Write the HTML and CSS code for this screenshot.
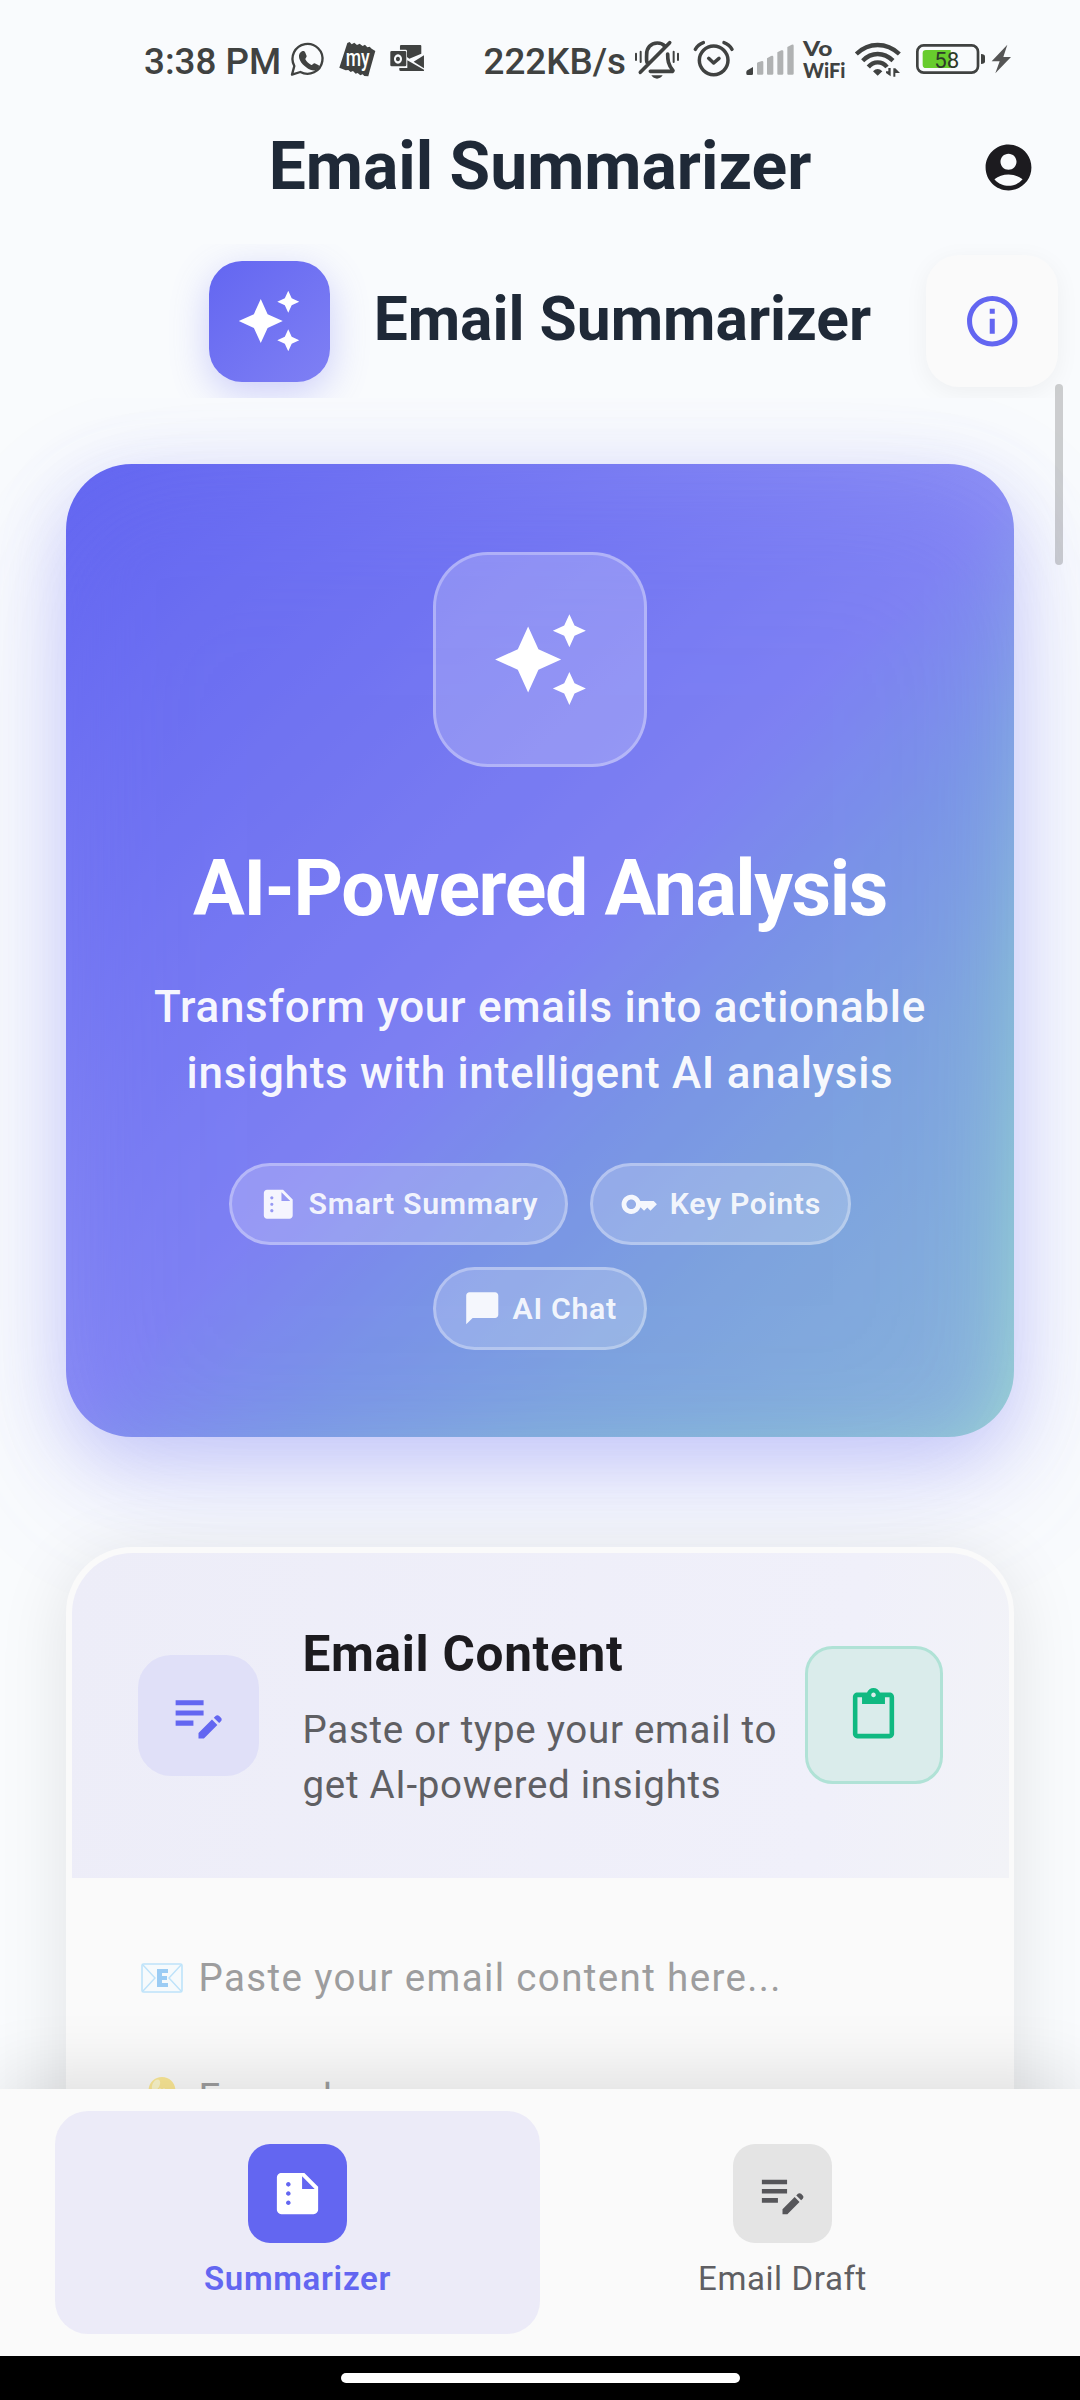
FILE: index.html
```html
<!DOCTYPE html>
<html lang="en">
<head>
<meta charset="utf-8">
<title>Email Summarizer</title>
<link rel="stylesheet" href="styles.css">
</head>
<body>
<svg class="defs" aria-hidden="true">
  <symbol id="sparkle" viewBox="0 0 24 24"><path d="M19 9l1.25-2.75L23 5l-2.75-1.25L19 1l-1.25 2.75L15 5l2.75 1.25L19 9zm-7.5.5L9 4 6.5 9.5 1 12l5.5 2.5L9 20l2.5-5.5L17 12l-5.5-2.5zM19 15l-1.25 2.75L15 19l2.75 1.25L19 23l1.25-2.75L23 19l-2.75-1.25L19 15z"/></symbol>
  <symbol id="summarize" viewBox="0 0 24 24"><path fill-rule="evenodd" d="M15 3H5c-1.1 0-1.99.9-1.99 2L3 19c0 1.1.89 2 1.99 2H19c1.1 0 2-.9 2-2V9l-6-6zM8 17c-.55 0-1-.45-1-1s.45-1 1-1 1 .45 1 1-.45 1-1 1zm0-4c-.55 0-1-.45-1-1s.45-1 1-1 1 .45 1 1-.45 1-1 1zm0-4c-.55 0-1-.45-1-1s.45-1 1-1 1 .45 1 1-.45 1-1 1zm6 1V4.500l5.500 5.500H14z"/></symbol>
  <symbol id="edit-note" viewBox="0 0 24 24"><path d="M3 10h11v2H3v-2zm0-2h11V6H3v2zm0 8h7v-2H3v2zm15.010-3.130.710-.710c.390-.390 1.020-.390 1.410 0l.710.710c.390.390.390 1.020 0 1.410l-.710.710-2.120-2.120zm-.710.710-5.300 5.300V21h2.120l5.300-5.300-2.120-2.120z"/></symbol>
</svg>
<div class="screen">
  <header class="status">
    <span class="status-time">3:38 PM</span>
    <svg class="notif" viewBox="500 60 430 120" width="143.300" height="40">
      <path class="line" d="M515 167l7-26a45 45 0 1 1 18 18z" stroke-width="7"/>
      <path class="ink" d="M545 97c5-2 8-1 10 4l4 10c1 3-5 8-4 10 4 8 10 13 18 17 3 1 7-6 10-5l12 6c2 1 1 6-1 9-5 7-14 8-24 4-17-7-33-24-34-38-1-7 3-14 9-17z"/>
      <path class="ink" d="M681 72l7-3 6 7 8-5 8 7 8-4 9 7 7-4 7 8 7-2 6 6 11 7-17 60-4 16-12-1-5-5-7 3-8-7-6 2-8-8-7 3-7-6-8 1-19-8z"/>
      <text class="my" x="676" y="141" textLength="72" lengthAdjust="spacingAndGlyphs">my</text>
      <path class="ink" d="M842 78h58q3 0 3 3v23l-36 15-7-5V96q0-4-4-4h-17v-10q0-4 3-4z"/>
      <path class="ink" fill-rule="evenodd" d="M814 96h40q4 0 4 4v38q0 4-4 4h-40q-4 0-4-4v-38q0-4 4-4zM833 106a12 14 0 1 0 .1 0zM833 113a6 7 0 1 1-.1 0z"/>
      <path class="ink" d="M911 109v39l-31-20zM861 124l50 28v4h-70q-4 0-4-4v-5h24z"/>
    </svg>
    <span class="status-net">222KB/s</span>
    <svg class="sys" viewBox="96 60 1149 120" width="383" height="40">
      <path class="line" d="M141 130q-2-5-1-24c0-19 12-34 32-34 9 0 17 3 22 9M203 105c0 18 1 31 16 50l-2 2h-66M209 71l-88 89" stroke-width="11"/>
      <path class="line" d="M108 104v19M122 98v31M221 98v31M234 104v19" stroke-width="6"/>
      <path class="ink" d="M154 169h34q-7 10-17 10t-17-10z"/>
      <circle class="line" cx="341" cy="124" r="43" stroke-width="10.500"/>
      <path class="line" d="M286 91q9-15 24-20M396 91q-9-15-24-20M326 118l15 14 16-14" stroke-width="10.500"/>
      <path class="ink" d="M459 144v20q0 4-4 4h-12q-4 0-4-4v-4q0-4 3-6z"/>
      <path class="faint" d="M471 133q0-2 3-3l12-4q4 0 4 3v35q0 3-4 3h-12q-3 0-3-3zM501 118l12-7q7-2 7 3v50q0 3-4 3h-12q-3 0-3-3zM532 100l12-6q6-2 6 3v67q0 3-4 3h-11q-3 0-3-3zM562 84l13-7q6-2 6 3v84q0 3-4 3h-12q-3 0-3-3z"/>
      <text class="vo" x="609" y="111" textLength="88" lengthAdjust="spacingAndGlyphs">Vo</text>
      <text class="vo" x="609" y="177" textLength="127" lengthAdjust="spacingAndGlyphs">WiFi</text>
      <g class="line arcs" stroke-width="13">
        <path d="M769 105q28-27 64-27t65 27"/>
        <path d="M788 125q20-20 45-20t46 20"/>
        <path d="M805 144q12-14 28-14 17 0 28 14"/>
      </g>
      <path class="ink" d="M819 157q14-14 28 0l-14 13zM858 157h7v-10h7v25l-14-10zM880 148v25h6v-11h14l-14-14z"/>
      <rect class="line" x="952" y="79" width="182" height="82" rx="19" stroke-width="8"/>
      <path class="ink" d="M1143 105q12 0 12 8v14q0 8-12 8z"/>
      <path class="charge" d="M978 93h74v54h-74q-10 0-10-10v-34q0-10 10-10z"/>
      <text class="pct" x="1003" y="146" textLength="75" lengthAdjust="spacingAndGlyphs">58</text>
      <path class="bolt" d="M1222 77l-47 50h24l-13 36 47-49h-23z"/>
    </svg>
  </header>

  <div class="appbar">
    <h1 class="appbar-title">Email Summarizer</h1>
    <svg class="account" viewBox="0 0 24 24"><path d="M12 2C6.480 2 2 6.480 2 12s4.480 10 10 10 10-4.480 10-10S17.520 2 12 2zm0 4c1.930 0 3.500 1.570 3.500 3.500S13.930 13 12 13s-3.500-1.570-3.500-3.500S10.070 6 12 6zm0 14c-2.030 0-4.430-.820-6.140-2.880C7.550 15.800 9.680 15 12 15s4.450.8 6.140 2.120C16.430 19.180 14.030 20 12 20z"/></svg>
  </div>

  <div class="toolbar">
    <div class="logo"><svg><use href="#sparkle"/></svg></div>
    <h2 class="toolbar-title">Email Summarizer</h2>
    <div class="info"><svg viewBox="0 0 24 24"><path d="M11 7h2v2h-2zm0 4h2v6h-2zm1-9C6.480 2 2 6.480 2 12s4.480 10 10 10 10-4.480 10-10S17.520 2 12 2zm0 18c-4.410 0-8-3.590-8-8s3.590-8 8-8 8 3.590 8 8-3.590 8-8 8z"/></svg></div>
  </div>

  <main class="scroll">
    <section class="hero">
      <div class="hero-icon"><svg><use href="#sparkle"/></svg></div>
      <h2 class="hero-title">AI-Powered Analysis</h2>
      <p class="hero-text">Transform your emails into actionable<br>insights with intelligent AI analysis</p>
      <div class="chips">
        <div class="chip"><svg><use href="#summarize"/></svg><span>Smart Summary</span></div>
        <div class="chip"><svg viewBox="0 0 24 24"><path d="M21 10h-8.350C11.830 7.670 9.610 6 7 6c-3.310 0-6 2.690-6 6s2.690 6 6 6c2.610 0 4.830-1.670 5.650-4H13l2 2 2-2 2 2 4-4.040L21 10zM7 15c-1.650 0-3-1.350-3-3s1.350-3 3-3 3 1.350 3 3-1.350 3-3 3z"/></svg><span>Key Points</span></div>
        <div class="chip"><svg viewBox="0 0 24 24"><path d="M20 2H4c-1.100 0-2 .9-2 2v18l4-4h14c1.100 0 2-.9 2-2V4c0-1.100-.9-2-2-2z"/></svg><span>AI Chat</span></div>
      </div>
    </section>

    <section class="card">
      <div class="card-head">
        <div class="card-icon"><svg><use href="#edit-note"/></svg></div>
        <div class="card-copy">
          <h3 class="card-title">Email Content</h3>
          <p class="card-text">Paste or type your email to<br>get AI-powered insights</p>
        </div>
        <div class="paste"><svg viewBox="0 0 24 24"><path d="M19 2h-4.180C14.400.84 13.300 0 12 0c-1.300 0-2.400.84-2.820 2H5c-1.100 0-2 .9-2 2v16c0 1.100.9 2 2 2h14c1.100 0 2-.9 2-2V4c0-1.100-.9-2-2-2zm-7 0c.55 0 1 .45 1 1s-.45 1-1 1-1-.45-1-1 .45-1 1-1zm7 18H5V4h2v3h10V4h2v16z"/></svg></div>
      </div>
      <div class="card-body">
        <div class="line-row">
          <svg class="emoji" viewBox="0 0 42 30"><rect x="1" y="1" width="40" height="28" rx="1.500" fill="#f4fbff" stroke="#82cdfa" stroke-width="1.600"/><path d="M2 2l12 13L2 28M40 2L28 15l12 13" fill="none" stroke="#82cdfa" stroke-width="1.400"/><path d="M16 6h11v4h-6v3h5v4h-5v3h6v4H16z" fill="#3ea0f0"/></svg>
          <span>Paste your email content here...</span>
        </div>
        <div class="line-row"></div>
        <div class="line-row">
          <svg class="emoji" viewBox="0 0 42 42"><path d="M21 0c-8 0-13.500 6-13.500 14 0 7 7 11 7 18h13c0-7 7-11 7-18C34.500 6 29 0 21 0z" fill="#fdd835"/><ellipse cx="15" cy="8" rx="3.500" ry="6" transform="rotate(28 15 8)" fill="#fff59d"/><path d="M17 14l2-2 2 2 2-2 2 2" fill="none" stroke="#fff" stroke-width="1.200"/></svg>
          <span>Example:</span>
        </div>
      </div>
    </section>
  </main>
  <div class="thumb"></div>

  <nav class="tabs">
    <div class="tab tab-on"><div class="tab-icon"><svg><use href="#summarize"/></svg></div><span>Summarizer</span></div>
    <div class="tab"><div class="tab-icon"><svg><use href="#edit-note"/></svg></div><span>Email Draft</span></div>
  </nav>
  <div class="gesture"><div class="gesture-bar"></div></div>
</div>
</body>
</html>
```
FILE: styles.css
```css
* { box-sizing: border-box; }
body { margin: 0; font-family: Roboto, sans-serif; background: #f9fbfd; }
h1, h2, h3, p { margin: 0; white-space: nowrap; }
svg { display: block; flex: none; fill: currentColor; }
.defs { position: absolute; width: 0; height: 0; }
.screen { position: relative; width: 1080px; height: 2400px; display: flex; flex-direction: column; overflow: hidden; background: #f9fbfd; }

/* status bar */
.status { height: 122px; display: flex; align-items: center; color: #404241; padding: 0 65px 0 144px; font-size: 36.800px; font-weight: 500; white-space: nowrap; flex: none; }
.notif { margin: 0 0 4px 6px; }
.status-net { margin-left: auto; }
.sys { margin: 0 0 4px 6px; }
.ink { fill: #404241; }
.line { fill: none; stroke: #404241; stroke-linecap: round; stroke-linejoin: round; }
.arcs { stroke-linecap: butt; }
.faint { fill: #b0b2b3; }
.charge { fill: #67cc2d; }
.bolt { fill: #555; }
.my { font: 500 74px Roboto, sans-serif; fill: #fff; }
.vo { font: 900 60px Lato, sans-serif; fill: #404241; }
.pct { font: 400 68px Roboto, sans-serif; fill: #2e3a2a; }

/* app bar */
.appbar { height: 89px; display: grid; grid-template-columns: 100px 1fr 100px; align-items: center; flex: none; color: #1f2937; }
.appbar-title { grid-column: 2; text-align: center; font-size: 66px; line-height: 89px; font-weight: 700; }
.account { width: 55px; height: 55px; color: #1c1b1f; margin: 2px 0 0 1px; }

/* toolbar */
.toolbar { margin-top: 33px; height: 154px; padding: 0 22px 0 208.700px; display: flex; align-items: center; overflow: hidden; flex: none; }
.logo { width: 121px; height: 121px; border-radius: 33px; display: grid; place-items: center; color: #fff; background: linear-gradient(135deg, #6366f1, #7f80f4); box-shadow: 0 11px 38px rgba(99, 102, 241, .3); }
.logo svg { width: 66px; height: 66px; }
.toolbar-title { margin-left: 44px; padding-bottom: 3px; font-size: 60.500px; font-weight: 700; color: #1f2937; }
.info { margin-left: auto; width: 132px; height: 132px; border-radius: 33px; display: grid; place-items: center; background: #fafafa; color: #6366f1; box-shadow: 0 5px 25px rgba(0, 0, 0, .05); }
.info svg { width: 60.500px; height: 60.500px; }

/* scroll area */
.scroll { position: relative; height: 1691px; padding: 66px; overflow: hidden; flex: none; }
.thumb { position: absolute; right: 17px; top: 384px; width: 8px; height: 181px; border-radius: 4px; background: rgba(0, 0, 0, .18); }

.hero { position: relative; z-index: 0; height: 973px; padding: 88px 66px 0; border-radius: 66px; color: #fff; display: flex; flex-direction: column; align-items: center; background: linear-gradient(135.700deg, rgb(99, 102, 241) 0%, rgba(99, 102, 241, .7) 50%, rgba(68, 131, 208, .62) 62.500%, rgba(48, 156, 175, .53) 75%, rgba(30, 171, 152, .45) 87.500%, rgba(16, 185, 129, .37) 100%); }
.hero::before, .hero::after { content: ""; position: absolute; inset: 0; z-index: -1; border-radius: 66px; background: #6366f1; }
.hero::before { top: 22px; bottom: -22px; opacity: .3; filter: blur(38px); }
.hero::after { top: 50px; bottom: -50px; opacity: .12; filter: blur(76px); }
.hero-icon { width: 214.500px; height: 214.500px; border-radius: 55px; border: 3px solid rgba(255, 255, 255, .3); background: rgba(255, 255, 255, .2); display: grid; place-items: center; }
.hero-icon svg { width: 99px; height: 99px; }
.hero-title { margin-top: 76px; font-size: 77px; line-height: 92px; font-weight: 700; letter-spacing: -1.400px; }
.hero-text { margin-top: 39px; font-size: 44px; line-height: 66px; font-weight: 500; letter-spacing: .7px; text-align: center; color: rgba(255, 255, 255, .95); }
.chips { margin-top: 57px; width: 772px; display: flex; flex-wrap: wrap; justify-content: center; gap: 22px; }
.chip { height: 82.500px; padding: 0 27px; border: 3px solid rgba(255, 255, 255, .3); border-radius: 55px; background: rgba(255, 255, 255, .2); display: flex; align-items: center; gap: 11px; font-size: 30.250px; font-weight: 600; letter-spacing: .7px; color: rgba(255, 255, 255, .9); white-space: nowrap; }
.chip svg { width: 38.500px; height: 38.500px; }

.card { margin-top: 110px; position: relative; height: 900px; border-radius: 66px; padding: 5.500px; background: #fafafa; box-shadow: 0 11px 70px rgba(0, 0, 0, .1); }
.card-head { height: 325px; padding: 0 66px; border-radius: 60.500px 60.500px 0 0; display: flex; align-items: center; background: linear-gradient(100deg, #ededf8, #f0f0fa 80%, #f2f3f7); }
.card-icon { width: 121px; height: 121px; border-radius: 33px; background: #e0e0f8; color: #6366f1; display: grid; place-items: center; }
.card-icon svg { width: 61px; height: 61px; }
.card-copy { margin-left: 44px; padding-top: 5px; }
.card-title { font-size: 49.500px; line-height: 60px; font-weight: 700; letter-spacing: .700px; color: #1c1b1f; }
.card-text { margin-top: 18px; font-size: 38.500px; line-height: 55px; color: #5f5f63; letter-spacing: .7px; }
.paste { margin-left: auto; width: 137.500px; height: 137.500px; border-radius: 27.500px; border: 3px solid #b0e2d6; background: #daeceb; color: #10b981; display: grid; place-items: center; }
.paste svg { width: 55px; height: 55px; }
.card-body { padding: 70px 66px; font-size: 38.500px; color: #9d9d9e; letter-spacing: 1.370px; white-space: nowrap; }
.line-row { height: 60px; display: flex; align-items: center; }
.emoji { width: 42px; margin: 0 16px 0 3px; opacity: .5; }

/* tabs */
.tabs { position: relative; height: 267px; padding: 22px 55px; background: #fafafa; display: grid; grid-template-columns: 1fr 1fr; box-shadow: 0 -14px 64px rgba(0, 0, 0, .11); flex: none; }
.tab { border-radius: 33px; padding-top: 33px; display: flex; flex-direction: column; align-items: center; font-size: 33px; line-height: 42px; letter-spacing: .6px; color: #5f5f63; }
.tab-icon { width: 99px; height: 99px; margin-bottom: 15px; border-radius: 22px; display: grid; place-items: center; background: #e4e4e4; color: #56565a; }
.tab-icon svg { width: 55px; height: 55px; }
.tab-on { background: #ecebf8; color: #6366f1; font-weight: 600; letter-spacing: .7px; }
.tab-on .tab-icon { background: #6366f1; color: #fff; }
.gesture { position: relative; flex: 1; background: #000; display: flex; justify-content: center; padding-top: 17px; }
.gesture-bar { width: 399px; height: 10px; border-radius: 5px; background: #fff; }
```
